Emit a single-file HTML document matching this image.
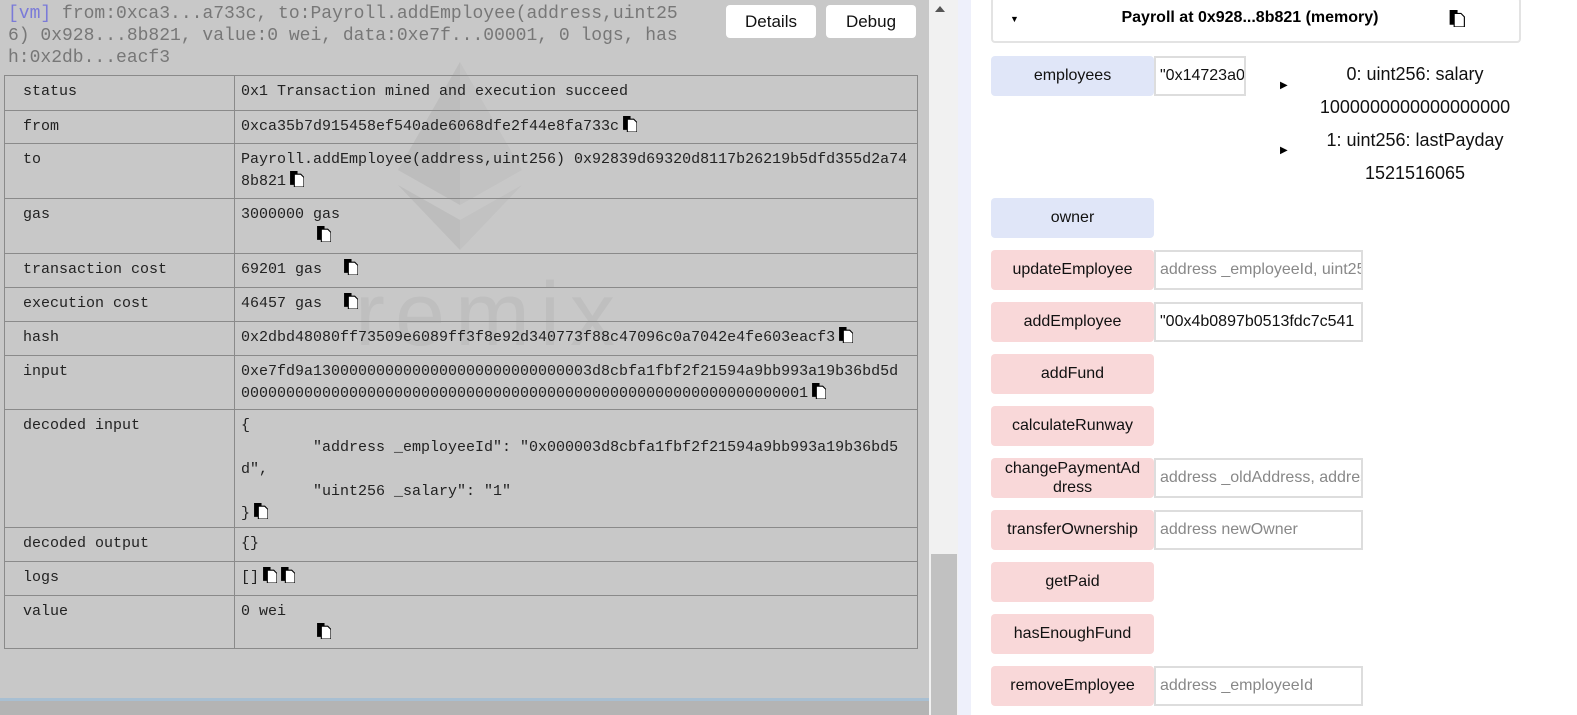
<!DOCTYPE html>
<html><head><meta charset="utf-8"><style>
*{box-sizing:border-box;margin:0;padding:0}
body{width:1577px;height:715px;overflow:hidden;background:#fff;position:relative;font-family:"Liberation Sans",sans-serif}
#left{position:absolute;left:0;top:0;width:929px;height:715px;background:#c8c8c8;overflow:hidden}
#hdr{position:absolute;left:8px;top:3px;width:680px;font:18px/22px "Liberation Mono",monospace;color:#777;word-break:break-all}
#hdr b{font-weight:normal;color:#7a7ad8}
.btn{position:absolute;top:5px;height:33px;background:#fff;border-radius:4px;font-size:17px;line-height:33px;text-align:center;color:#111}
table{position:absolute;left:4px;top:75px;width:914px;border-collapse:collapse;font:15px/22px "Liberation Mono",monospace;color:#222;table-layout:fixed}
td{border:1px solid #8a8a8a;vertical-align:top;padding:5px 8px 0 18px;word-break:break-all}
td.v{padding-left:6px}
.ci{display:inline-block;width:14px;height:16px;vertical-align:-2px;margin-left:4px}
#sb{position:absolute;left:929px;top:0;width:29px;height:715px;background:#f1f1f1}
#thumb{position:absolute;left:931px;top:554px;width:26px;height:161px;background:#c1c1c1}
#rb{position:absolute;left:958px;top:0;width:13px;height:715px;background:#eef0fb}
.fb{position:absolute;left:991px;width:163px;height:40px;border-radius:4px;font-size:16px;text-align:center;line-height:40px;color:#111}
.blue{background:#e0e6f8}.red{background:#f9d8d9}
.in{position:absolute;left:1154px;height:40px;border:2px solid #ddd;background:#fff;font-size:16px;line-height:36px;padding-left:4px;white-space:nowrap;overflow:hidden;color:#111}
.ph{color:#888}
</style></head><body>
<div id="left">
<svg style="position:absolute;left:0;top:0" width="929" height="715">
<polygon points="460,62 398,170 460,205" fill="#bdbdbd"/><polygon points="460,62 522,170 460,205" fill="#c2c2c2"/>
<polygon points="398,185 460,250 460,220" fill="#bdbdbd"/><polygon points="522,185 460,250 460,220" fill="#c2c2c2"/>
<text x="355" y="345" font-family="Liberation Sans,sans-serif" font-size="90" fill="#bfbfbf" letter-spacing="10">remix</text>
</svg>
<div id="hdr"><b>[vm]</b> from:0xca3...a733c, to:Payroll.addEmployee(address,uint256) 0x928...8b821, value:0 wei, data:0xe7f...00001, 0 logs, hash:0x2db...eacf3</div>
<div class="btn" style="left:726px;width:90px">Details</div>
<div class="btn" style="left:826px;width:90px">Debug</div>
<table>
<colgroup><col style="width:230px"><col></colgroup>
<tr style="height:35px"><td>status</td><td class="v">0x1 Transaction mined and execution succeed</td></tr>
<tr style="height:33px"><td>from</td><td class="v">0xca35b7d915458ef540ade6068dfe2f44e8fa733c<svg class="ci" viewBox="0 0 13 15"><rect x="0" y="0" width="7" height="13" fill="#000"/><path d="M4 3h6l3 3v9H4z" fill="#fff" stroke="#000"/></svg></td></tr>
<tr style="height:55px"><td>to</td><td class="v">Payroll.addEmployee(address,uint256) 0x92839d69320d8117b26219b5dfd355d2a748b821<svg class="ci" viewBox="0 0 13 15"><rect x="0" y="0" width="7" height="13" fill="#000"/><path d="M4 3h6l3 3v9H4z" fill="#fff" stroke="#000"/></svg></td></tr>
<tr style="height:55px"><td>gas</td><td class="v">3000000 gas<br><span style="padding-left:72px"></span><svg class="ci" viewBox="0 0 13 15"><rect x="0" y="0" width="7" height="13" fill="#000"/><path d="M4 3h6l3 3v9H4z" fill="#fff" stroke="#000"/></svg></td></tr>
<tr style="height:34px"><td>transaction cost</td><td class="v">69201 gas &nbsp;<svg class="ci" viewBox="0 0 13 15"><rect x="0" y="0" width="7" height="13" fill="#000"/><path d="M4 3h6l3 3v9H4z" fill="#fff" stroke="#000"/></svg></td></tr>
<tr style="height:34px"><td>execution cost</td><td class="v">46457 gas &nbsp;<svg class="ci" viewBox="0 0 13 15"><rect x="0" y="0" width="7" height="13" fill="#000"/><path d="M4 3h6l3 3v9H4z" fill="#fff" stroke="#000"/></svg></td></tr>
<tr style="height:34px"><td>hash</td><td class="v">0x2dbd48080ff73509e6089ff3f8e92d340773f88c47096c0a7042e4fe603eacf3<svg class="ci" viewBox="0 0 13 15"><rect x="0" y="0" width="7" height="13" fill="#000"/><path d="M4 3h6l3 3v9H4z" fill="#fff" stroke="#000"/></svg></td></tr>
<tr style="height:54px"><td>input</td><td class="v">0xe7fd9a1300000000000000000000000000003d8cbfa1fbf2f21594a9bb993a19b36bd5d<br>000000000000000000000000000000000000000000000000000000000000001<svg class="ci" viewBox="0 0 13 15"><rect x="0" y="0" width="7" height="13" fill="#000"/><path d="M4 3h6l3 3v9H4z" fill="#fff" stroke="#000"/></svg></td></tr>
<tr style="height:118px"><td>decoded input</td><td class="v" style="white-space:pre-wrap">{
	"address _employeeId": "0x000003d8cbfa1fbf2f21594a9bb993a19b36bd5d",
	"uint256 _salary": "1"
}<svg class="ci" viewBox="0 0 13 15"><rect x="0" y="0" width="7" height="13" fill="#000"/><path d="M4 3h6l3 3v9H4z" fill="#fff" stroke="#000"/></svg></td></tr>
<tr style="height:34px"><td>decoded output</td><td class="v">{}</td></tr>
<tr style="height:34px"><td>logs</td><td class="v">[]<svg class="ci" viewBox="0 0 13 15"><rect x="0" y="0" width="7" height="13" fill="#000"/><path d="M4 3h6l3 3v9H4z" fill="#fff" stroke="#000"/></svg><svg class="ci" viewBox="0 0 13 15"><rect x="0" y="0" width="7" height="13" fill="#000"/><path d="M4 3h6l3 3v9H4z" fill="#fff" stroke="#000"/></svg></td></tr>
<tr style="height:53px"><td>value</td><td class="v">0 wei<br><span style="padding-left:72px"></span><svg class="ci" viewBox="0 0 13 15"><rect x="0" y="0" width="7" height="13" fill="#000"/><path d="M4 3h6l3 3v9H4z" fill="#fff" stroke="#000"/></svg></td></tr>
</table>
<div style="position:absolute;left:0;top:698px;width:929px;height:3px;background:#a8bfd2"></div>
<div style="position:absolute;left:0;top:701px;width:929px;height:14px;background:#b4b4b4"></div>
</div>
<div id="sb"></div><div id="thumb"></div>
<div style="position:absolute;left:935px;top:6px;width:0;height:0;border-left:5px solid transparent;border-right:5px solid transparent;border-bottom:6px solid #555"></div>
<div id="rb"></div>

<div style="position:absolute;left:991px;top:-3px;width:530px;height:46px;border:2px solid #e3e3e3;border-radius:4px;background:#fff"></div>
<div style="position:absolute;left:1010px;top:14px;font-size:9px">▼</div>
<div style="position:absolute;left:1060px;top:9px;width:380px;text-align:center;font-weight:bold;font-size:16px">Payroll at 0x928...8b821 (memory)</div>
<svg style="position:absolute;left:1449px;top:10px" width="16" height="17" viewBox="0 0 13 15"><rect x="0" y="0" width="7" height="13" fill="#000"/><path d="M4 3h6l3 3v9H4z" fill="#fff" stroke="#000"/></svg>

<div class="fb blue" style="top:56px">employees</div>
<div class="in" style="top:56px;width:92px">"0x14723a09</div>
<div style="position:absolute;left:1280px;top:80px;font-size:10px">▶</div>
<div style="position:absolute;left:1280px;top:145px;font-size:10px">▶</div>
<div style="position:absolute;left:1300px;top:58px;width:230px;text-align:center;font-size:18px;line-height:33px;color:#111">0: uint256: salary<br>1000000000000000000<br>1: uint256: lastPayday<br>1521516065</div>

<div class="fb blue" style="top:198px">owner</div>
<div class="fb red" style="top:250px">updateEmployee</div><div class="in" style="top:250px;width:209px"><span class="ph">address _employeeId, uint256</span></div>
<div class="fb red" style="top:302px">addEmployee</div><div class="in" style="top:302px;width:209px">"00x4b0897b0513fdc7c541</div>
<div class="fb red" style="top:354px">addFund</div>
<div class="fb red" style="top:406px">calculateRunway</div>
<div class="fb red" style="top:458px;line-height:19px;padding-top:1px">changePaymentAd<br>dress</div><div class="in" style="top:458px;width:209px"><span class="ph">address _oldAddress, address</span></div>
<div class="fb red" style="top:510px">transferOwnership</div><div class="in" style="top:510px;width:209px"><span class="ph">address newOwner</span></div>
<div class="fb red" style="top:562px">getPaid</div>
<div class="fb red" style="top:614px">hasEnoughFund</div>
<div class="fb red" style="top:666px">removeEmployee</div><div class="in" style="top:666px;width:209px"><span class="ph">address _employeeId</span></div>
</body></html>
